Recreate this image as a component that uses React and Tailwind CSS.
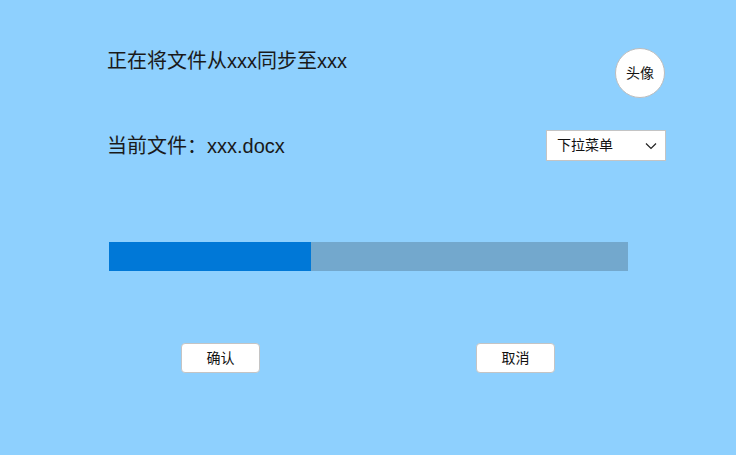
export default function App() {
  const font = { fontFamily: '"Liberation Sans", "Noto Sans CJK SC", sans-serif' };
  return (
    <div className="w-[736px] h-[455px] bg-[#8ed0fe] overflow-hidden" style={font}>
      <div className="pl-[107px] pr-[70px]">
        <div className="flex items-start justify-between pt-[48px]">
          <div className="text-[20px] leading-[26px] text-[#1a1a1a]">正在将文件从xxx同步至xxx</div>
          <div className="w-[50px] h-[50px] mr-[1px] rounded-full bg-white border border-[#bdbdbd] flex items-center justify-center text-[14px] text-[#111]">
            头像
          </div>
        </div>
        <div className="flex items-center justify-between mt-[32px] h-[31px]">
          <div className="text-[20px] leading-[26px] text-[#1a1a1a]">当前文件：xxx.docx</div>
          <div className="w-[120px] h-[31px] bg-white border border-[#c4c4c4] flex items-center justify-between pl-[10px] pr-[8px] text-[14px] text-[#111]">
            <span>下拉菜单</span>
            <svg width="12" height="8" viewBox="0 0 12 8" fill="none">
              <polyline points="1,1.5 6,6.5 11,1.5" stroke="#222" strokeWidth="1.2" />
            </svg>
          </div>
        </div>
        <div className="ml-[2px] mt-[81px] w-[519px] h-[29px] bg-[#73a8cd] flex">
          <div className="w-[202px] h-full bg-[#0078d7]" />
        </div>
        <div className="flex mt-[72px] ml-[74px] gap-[216px]">
          <button className="w-[79px] h-[30px] bg-white border border-[#c4c4c4] rounded-[4px] text-[14px] text-[#111] flex items-center justify-center">
            确认
          </button>
          <button className="w-[79px] h-[30px] bg-white border border-[#c4c4c4] rounded-[4px] text-[14px] text-[#111] flex items-center justify-center">
            取消
          </button>
        </div>
      </div>
    </div>
  );
}
